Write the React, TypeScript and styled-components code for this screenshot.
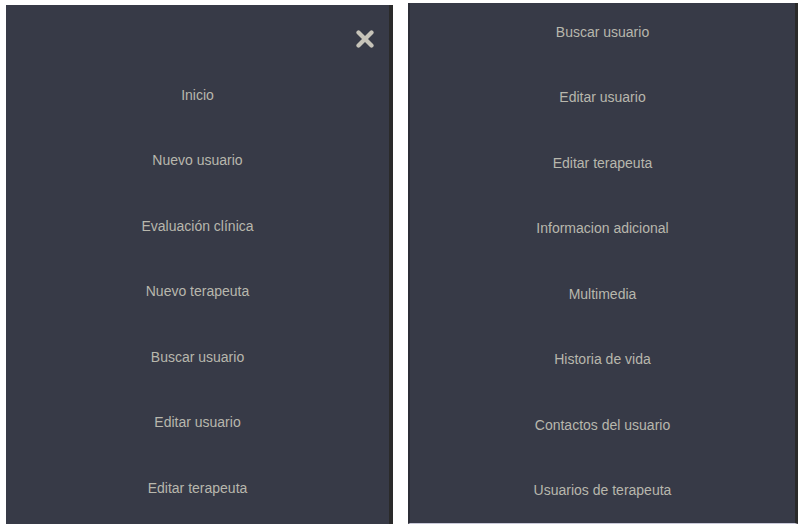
import React from "react";
import styled, { createGlobalStyle } from "styled-components";

const Global = createGlobalStyle`
  html, body { margin: 0; padding: 0; background: #ffffff; }
  body { font-family: "Liberation Sans", Arial, sans-serif; }
`;

const Page = styled.div`
  display: flex;
  align-items: flex-start;
  width: 802px;
  height: 528px;
  overflow: hidden;
`;

const Panel = styled.nav<{ $top: number; $left: number; $width: number; $height: number; $borderLeft?: number; $borderRight: number; $bottomLine?: boolean }>`
  position: relative;
  margin-top: ${(p) => p.$top}px;
  margin-left: ${(p) => p.$left}px;
  width: ${(p) => p.$width}px;
  height: ${(p) => p.$height}px;
  background: #373a47;
  border-left: ${(p) => p.$borderLeft ?? 0}px solid #2c2e37;
  border-right: ${(p) => p.$borderRight}px solid #2a2a2a;
  border-bottom: ${(p) => (p.$bottomLine ? "1px solid #c9c9d9" : "none")};
  overflow: hidden;
  flex-shrink: 0;
`;

const Menu = styled.ul<{ $offset: number }>`
  list-style: none;
  margin: ${(p) => p.$offset}px 0 0 0;
  padding: 0;
  display: flex;
  flex-direction: column;
`;

const Item = styled.li`
  height: 65.5px;
  display: flex;
  align-items: center;
  justify-content: center;
  color: #b8b7ad;
  font-size: 14px;
  font-family: "Liberation Sans", Arial, sans-serif;
  white-space: nowrap;
`;

const Close = styled.button`
  position: absolute;
  top: 24px;
  right: 14px;
  width: 20px;
  height: 20px;
  padding: 0;
  border: none;
  background: transparent;
  display: flex;
  align-items: center;
  justify-content: center;
`;

const left = [
  "Inicio",
  "Nuevo usuario",
  "Evaluación clínica",
  "Nuevo terapeuta",
  "Buscar usuario",
  "Editar usuario",
  "Editar terapeuta",
];

const right = [
  "Buscar usuario",
  "Editar usuario",
  "Editar terapeuta",
  "Informacion adicional",
  "Multimedia",
  "Historia de vida",
  "Contactos del usuario",
  "Usuarios de terapeuta",
];

export default function App() {
  return (
    <Page>
      <Global />
      <Panel $top={5} $left={6} $width={383} $height={519} $borderRight={4}>
        <Close aria-label="Cerrar menú">
          <svg width="18" height="18" viewBox="0 0 18 18">
            <line x1="2.5" y1="2.5" x2="15.5" y2="15.5" stroke="#c6c3b9" strokeWidth="4.2" strokeLinecap="round" />
            <line x1="15.5" y1="2.5" x2="2.5" y2="15.5" stroke="#c6c3b9" strokeWidth="4.2" strokeLinecap="round" />
          </svg>
        </Close>
        <Menu $offset={57}>
          {left.map((t) => (
            <Item key={t}>{t}</Item>
          ))}
        </Menu>
      </Panel>
      <Panel $top={3} $left={15} $width={385} $height={520} $borderLeft={2} $borderRight={3} $bottomLine>
        <Menu $offset={-4}>
          {right.map((t) => (
            <Item key={t}>{t}</Item>
          ))}
        </Menu>
      </Panel>
    </Page>
  );
}
